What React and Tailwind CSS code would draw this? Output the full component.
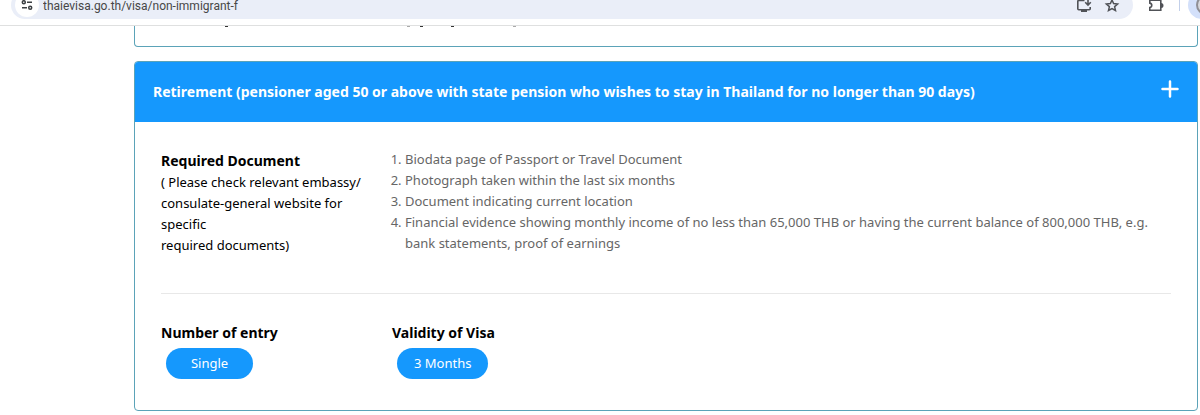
import React, { useState } from 'react';

const requiredDocuments = [
    'Biodata page of Passport or Travel Document',
    'Photograph taken within the last six months',
    'Document indicating current location',
    'Financial evidence showing monthly income of no less than 65,000 THB or having the current balance of 800,000 THB, e.g. bank statements, proof of earnings',
];

const TuneIcon = () => (
    <svg className="h-3 w-3" viewBox="0 0 12 12" fill="none" stroke="#3c4043" strokeWidth="1.5">
        <path d="M6 3.2h5M1 8.8h5" />
        <circle cx="2.8" cy="3.2" r="1.5" />
        <circle cx="9.2" cy="8.8" r="1.5" />
    </svg>
);

const InstallIcon = () => (
    <svg className="h-4 w-4" viewBox="0 0 16 16" fill="none" stroke="#505257" strokeWidth="1.6">
        <path d="M8.5 3.5H2.8a1 1 0 0 0-1 1v7.2a1 1 0 0 0 1 1h10.4a1 1 0 0 0 1-1V10" />
        <path d="M5 14h6" strokeWidth="2" />
        <path d="M12 2v6M9.2 5.3l2.8 2.8 2.8-2.8" />
    </svg>
);

const StarIcon = () => (
    <svg className="h-4 w-4" viewBox="0 0 16 16" fill="none" stroke="#505257" strokeWidth="1.5">
        <path d="M8 3l1.6 3.6 4 .4-3 2.6.9 3.9L8 11.5l-3.5 2 .9-3.9-3-2.6 4-.4z" />
    </svg>
);

const PuzzleIcon = () => (
    <svg className="h-4 w-4" viewBox="0 0 16 16" fill="none" stroke="#505257" strokeWidth="1.6">
        <path d="M1.8 3.3h11v9.9h-11v-2.7c2.6-.3 2.6-4.1 0-4.4z" />
        <path d="M13 6.7a1.7 1.7 0 0 1 0 3.4z" fill="#505257" />
    </svg>
);

const BrowserBar = () => (
    <header className="flex h-[26px] items-end overflow-hidden border-b border-[#dfe0e0] pb-[6px] pl-[11px]">
        <div className="flex h-7 min-w-0 flex-1 items-center rounded-full bg-[#eaeef8] pl-1 pr-[13px]">
            <button type="button" aria-label="Site information" className="flex h-6 w-6 shrink-0 items-center justify-center rounded-full bg-white">
                <TuneIcon />
            </button>
            <input
                aria-label="Address"
                defaultValue="thaievisa.go.th/visa/non-immigrant-f"
                className="min-w-0 flex-1 pl-1 pt-0.5 font-[Roboto,sans-serif] text-xs text-[#474747] outline-none"
            />
            <div className="flex gap-3">
                <button type="button" aria-label="Install app"><InstallIcon /></button>
                <button type="button" aria-label="Bookmark"><StarIcon /></button>
            </div>
        </div>
        <div className="flex h-7 w-[67px] shrink-0 items-center pl-[15px]">
            <button type="button" aria-label="Extensions" className="shrink-0"><PuzzleIcon /></button>
            <span className="ml-[15px] h-3 w-px shrink-0 bg-[#c3d0ea]" />
            <button type="button" aria-label="Profile" className="ml-2 flex h-7 w-20 shrink-0 items-center rounded-full bg-[#d3e0fa] pl-2">
                <span className="h-5 w-5 rounded-full border-2 border-[#8f8f95] bg-[#d8d8dc]" />
            </button>
        </div>
    </header>
);

// bottoms of the descenders in the heading that is scrolled under the browser bar
const ScrolledHeading = () => (
    <svg className="h-[2px] w-[400px]" viewBox="0 0 400 2" stroke="#333333">
        <path d="M90 .5h3M285 .5h3M316 .5h3" />
        <path d="M272 .5h3M378 .5h3" stroke="#aaaaaa" />
    </svg>
);

const Heading = ({ children }) => (
    <h3 className="text-sm font-bold leading-[23px] text-black">{children}</h3>
);

const Pill = ({ children }) => (
    <span className="ml-[5px] mt-1 inline-flex h-[31px] min-w-[87px] items-center justify-center rounded-full bg-[#1598fd] px-[17px] text-[13px] text-white">
        {children}
    </span>
);

const App = () => {
    const [open, setOpen] = useState(true);

    return (
        <div className="bg-white font-['Noto_Sans',sans-serif]">
            <BrowserBar />
            <main className="pl-[134px] pr-[2px]">
                <section className="h-[21px] rounded-b-[4px] border border-t-0 border-[#5ba3b8]">
                    <ScrolledHeading />
                </section>

                <section className="mt-[14px] overflow-hidden rounded-[4px] border border-[#5ba3b8]">
                    <h2 className="bg-[#1598fd]">
                        <button
                            type="button"
                            aria-expanded={open}
                            onClick={() => setOpen(!open)}
                            className="flex h-[60px] w-full items-center justify-between px-[18px] text-left text-sm font-bold text-white"
                        >
                            Retirement (pensioner aged 50 or above with state pension who wishes to stay in Thailand for no longer than 90 days)
                            <svg className="mb-1.5 h-[18px] w-[18px] shrink-0" viewBox="0 0 18 18" stroke="currentColor" strokeWidth="2.5" strokeLinecap="round">
                                <path d="M9 1.5v15M1.5 9h15" />
                            </svg>
                        </button>
                    </h2>
                    {open && (
                        <div className="px-[26px] pb-[31px] pt-[27px]">
                            <div className="flex">
                                <div className="w-[230px] shrink-0">
                                    <Heading>Required Document</Heading>
                                    <p className="text-[13px] leading-[21px] text-black">
                                        ( Please check relevant embassy/<br />
                                        consulate-general website for<br />
                                        specific<br />
                                        required documents)
                                    </p>
                                </div>
                                <ol className="flex-1 list-decimal pl-[14px] text-[13px] leading-[21px] text-[#666666]">
                                    {requiredDocuments.map((doc) => (
                                        <li key={doc}>{doc}</li>
                                    ))}
                                </ol>
                            </div>
                            <hr className="mb-[27px] mt-[37px] border-[#e8e8e8]" />
                            <div className="flex">
                                <div className="flex w-[231px] flex-col items-start">
                                    <Heading>Number of entry</Heading>
                                    <Pill>Single</Pill>
                                </div>
                                <div className="flex flex-col items-start">
                                    <Heading>Validity of Visa</Heading>
                                    <Pill>3 Months</Pill>
                                </div>
                            </div>
                        </div>
                    )}
                </section>
            </main>
        </div>
    );
};

export default App;
